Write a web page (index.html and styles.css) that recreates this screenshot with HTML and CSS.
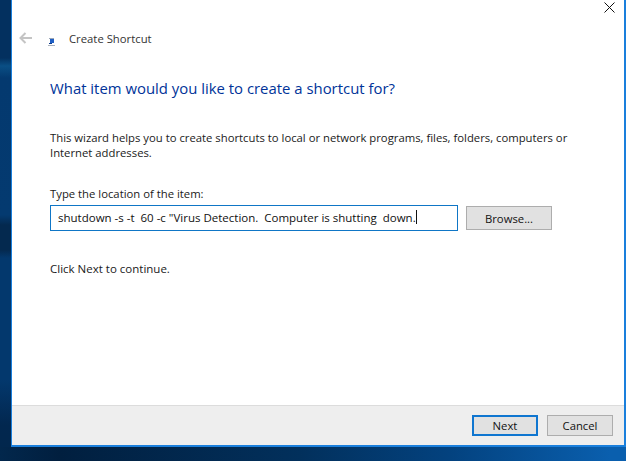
FILE: index.html
```html
<!DOCTYPE html>
<html lang="en">
<head>
<meta charset="utf-8">
<title>Create Shortcut</title>
<link rel="stylesheet" href="styles.css">
</head>
<body>
<div class="window">
  <div class="content">
    <button class="close" aria-label="Close">
      <svg width="11" height="11" viewBox="0 0 11 11"><path d="M.5.5l10 10M10.5.5l-10 10" fill="none" stroke="#111" stroke-width="1"/></svg>
    </button>
    <header class="titlebar">
      <svg class="back" width="14" height="12" viewBox="0 0 14 12"><path d="M13 6H2M6.500 1L1.500 6l5 5" fill="none" stroke="#c4c4c4" stroke-width="2"/></svg>
      <svg class="appicon" width="7" height="8" viewBox="0 0 7 8"><path d="M1 0h5v1H1z" fill="#9aa5b5"/><path d="M2 1h4v4H2z" fill="#1f5fc4"/><path d="M1 5h3v1H1z" fill="#0c3a8a"/><path d="M0 7h7v1H0z" fill="#a9b1bd"/></svg>
      <span class="title">Create Shortcut</span>
    </header>
    <h1 class="heading">What item would you like to create a shortcut for?</h1>
    <p class="intro">This wizard helps you to create shortcuts to local or network programs, files, folders, computers or Internet addresses.</p>
    <label class="label">Type the location of the item:</label>
    <div class="inputrow">
      <div class="input"><span>shutdown -s -t&nbsp; 60 -c "Virus Detection.&nbsp; Computer is shutting&nbsp; down.</span><i class="caret"></i></div>
      <button class="btn browse">Browse...</button>
    </div>
    <p class="hint">Click Next to continue.</p>
  </div>
  <footer class="footer">
    <button class="btn primary">Next</button>
    <button class="btn">Cancel</button>
  </footer>
</div>
</body>
</html>
```
FILE: styles.css
```css
* { box-sizing: border-box; }
html, body { margin: 0; height: 100%; }
body {
  width: 626px;
  height: 461px;
  overflow: hidden;
  padding-left: 11px;
  background:
    linear-gradient(180deg, #03305f 0, #03305f 58px, #0a4f85 66px, #04396f 78px, #043a70 215px, #04294f 225px, #04294f 250px, #03386d 258px, #03386d 380px, #02274f 425px, #02274c 461px) 0 0 / 12px 447px no-repeat,
    linear-gradient(90deg, #02274c 0, #011f3f 60px, #02305c 300px, #03427f 450px, #0a5fae 610px, #0a5fae 100%);
  font-family: "Open Sans", sans-serif;
  font-size: 11.3px;
  color: #1a1a1a;
}
.window {
  width: 615px;
  height: 447px;
  display: flex;
  flex-direction: column;
  background: #fff;
  border-left: 1px solid #1a7fdc;
  border-right: 2px solid #1a7fdc;
  border-bottom: 2px solid #1a7fdc;
}
.content {
  flex: 1;
  position: relative;
  padding: 0 0 0 38px;
}
.close {
  position: absolute;
  right: 9px;
  top: 2px;
  border: 0;
  padding: 0;
  background: none;
  line-height: 0;
}
.titlebar {
  display: flex;
  align-items: center;
  height: 78px;
  margin-left: -31px;
  padding-bottom: 1px;
}
.back { margin-right: 15px; margin-bottom: 1px; }
.appicon { margin-right: 14px; margin-top: 6px; }
.title { font-size: 11.3px; color: #333; }
.heading {
  margin: 0;
  font-size: 14.9px;
  font-weight: 400;
  line-height: 20px;
  color: #003399;
}
.intro {
  margin: 32px 0 0;
  width: 530px;
  line-height: 15px;
}
.label { display: block; margin-top: 26px; line-height: 16px; }
.inputrow {
  display: flex;
  gap: 8px;
  margin-top: 3px;
}
.input {
  width: 408px;
  height: 26px;
  border: 1px solid #0f76c6;
  padding: 0 0 2px 7px;
  display: flex;
  align-items: center;
  white-space: nowrap;
  font-size: 11.5px;
  color: #111;
}
.caret { width: 1px; height: 14px; background: #111; margin-left: 0; }
.btn {
  width: 66px;
  height: 21px;
  background: #e1e1e1;
  border: 1px solid #adadad;
  font: inherit;
  color: #111;
  padding: 0;
}
.browse { width: 86px; height: 24px; margin-top: 1px; }
.hint { margin: 30px 0 0; line-height: 16px; font-size: 11.5px; }
.footer {
  height: 40px;
  background: #eee;
  border-top: 1px solid #dcdcdc;
  display: flex;
  justify-content: flex-end;
  align-items: flex-start;
  gap: 9px;
  padding: 9px 11px 0 0;
}
.primary { border: 2px solid #0f76d0; }
```
